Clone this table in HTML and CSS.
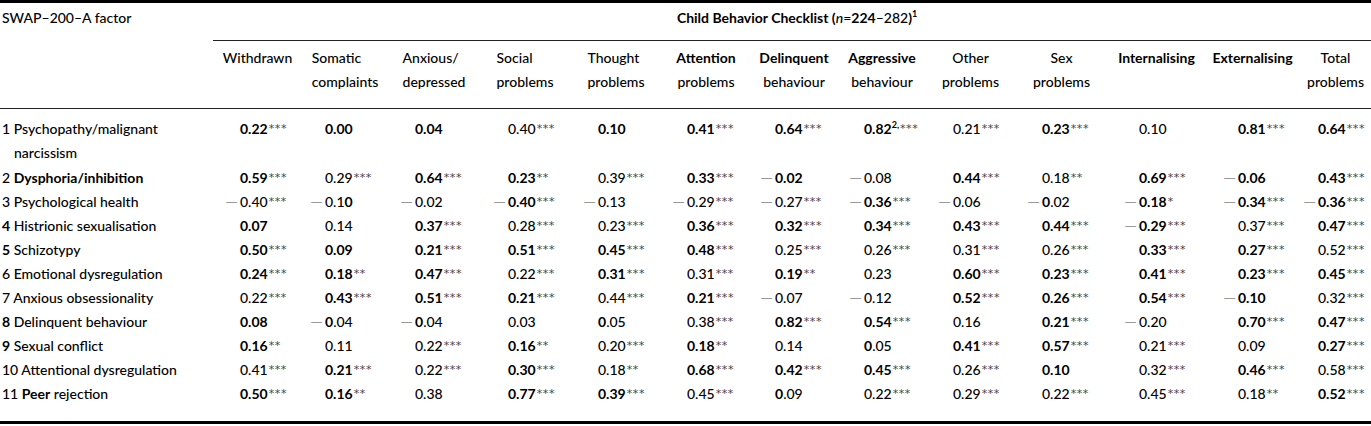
FILE: index.html
```html
<!DOCTYPE html>
<html lang="en">
<head>
<meta charset="utf-8">
<title>SWAP-200-A factors and CBCL</title>
<link rel="stylesheet" href="styles.css">
</head>
<body>
<div class="frame">
<table class="t">
<colgroup>
<col style="width:213px"><col style="width:89px"><col style="width:86px"><col style="width:92px"><col style="width:90px"><col style="width:92px"><col style="width:88px"><col style="width:88px"><col style="width:88px"><col style="width:89px"><col style="width:93px"><col style="width:97px"><col style="width:95px"><col style="width:71px">
</colgroup>
<thead>
<tr class="r1">
<th class="factor">SWAP–200–A factor</th>
<th class="grp" colspan="13"><b>Child Behavior Checklist (</b><i>n</i>=<b>224</b>–282<b>)</b><sup class="fn">1</sup></th>
</tr>
<tr class="r2">
<th></th>
<th>Withdrawn</th>
<th><span class="hl">Somatic<br>complaints</span></th>
<th><span class="hl">Anxious/<br>depressed</span></th>
<th><span class="hl">Social<br>problems</span></th>
<th><span class="hl">Thought<br>problems</span></th>
<th class="bh">Attention<br><span class="nb">problems</span></th>
<th class="bh">Delinquent<br><span class="nb">behaviour</span></th>
<th class="bh">Aggressive<br><span class="nb">behaviour</span></th>
<th>Other<br>problems</th>
<th>Sex<br>problems</th>
<th class="bh">Internalising</th>
<th class="bh">Externalising</th>
<th>Total<br>problems</th>
</tr>
</thead>
<tbody>
<tr>
<td class="lab">1 Psychopathy/malignant<br>narcissism</td>
<td><b>0.22</b><span class="s">***</span></td>
<td><b>0.00</b></td>
<td><b>0.04</b></td>
<td>0.40<span class="s">***</span></td>
<td><b>0.10</b></td>
<td><b>0.41</b><span class="s">***</span></td>
<td><b>0.64</b><span class="s">***</span></td>
<td><b>0.82</b><sup class="fn">2,</sup><span class="s">***</span></td>
<td>0.21<span class="s">***</span></td>
<td><b>0.23</b><span class="s">***</span></td>
<td>0.10</td>
<td><b>0.81</b><span class="s">***</span></td>
<td><b>0.64</b><span class="s">***</span></td>
</tr>
<tr>
<td class="lab">2 <b>Dysphoria/inhibition</b></td>
<td><b>0.59</b><span class="s">***</span></td>
<td>0.29<span class="s">***</span></td>
<td><b>0.64</b><span class="s">***</span></td>
<td><b>0.23</b><span class="s">**</span></td>
<td>0.39<span class="s">***</span></td>
<td><b>0.33</b><span class="s">***</span></td>
<td><span class="m">—</span><b>0.02</b></td>
<td><span class="m">—</span>0.08</td>
<td><b>0.44</b><span class="s">***</span></td>
<td>0.18<span class="s">**</span></td>
<td><b>0.69</b><span class="s">***</span></td>
<td><span class="m">—</span><b>0.06</b></td>
<td><b>0.43</b><span class="s">***</span></td>
</tr>
<tr>
<td class="lab">3 Psychological health</td>
<td><span class="m">—</span>0.40<span class="s">***</span></td>
<td><span class="m">—</span>0.1<b>0</b></td>
<td><span class="m">—</span>0.02</td>
<td><span class="m">—</span><b>0.40</b><span class="s">***</span></td>
<td><span class="m">—</span>0.13</td>
<td><span class="m">—</span>0.29<span class="s">***</span></td>
<td><span class="m">—</span>0.27<span class="s">***</span></td>
<td><span class="m">—</span><b>0.36</b><span class="s">***</span></td>
<td><span class="m">—</span>0.06</td>
<td><span class="m">—</span><b>0</b>.02</td>
<td><span class="m">—</span><b>0.18</b><span class="s">*</span></td>
<td><span class="m">—</span><b>0.34</b><span class="s">***</span></td>
<td><span class="m">—</span><b>0.36</b><span class="s">***</span></td>
</tr>
<tr>
<td class="lab"><b>4</b> Histrionic sexualisation</td>
<td><b>0.07</b></td>
<td>0.14</td>
<td><b>0.37</b><span class="s">***</span></td>
<td>0.28<span class="s">***</span></td>
<td>0.23<span class="s">***</span></td>
<td><b>0.36</b><span class="s">***</span></td>
<td><b>0.32</b><span class="s">***</span></td>
<td><b>0.34</b><span class="s">***</span></td>
<td><b>0.43</b><span class="s">***</span></td>
<td><b>0.44</b><span class="s">***</span></td>
<td><span class="m">—</span><b>0.29</b><span class="s">***</span></td>
<td>0.37<span class="s">***</span></td>
<td><b>0.47</b><span class="s">***</span></td>
</tr>
<tr>
<td class="lab"><b>5</b> Schizotypy</td>
<td><b>0.50</b><span class="s">***</span></td>
<td><b>0.09</b></td>
<td><b>0.21</b><span class="s">***</span></td>
<td><b>0.51</b><span class="s">***</span></td>
<td><b>0.45</b><span class="s">***</span></td>
<td><b>0.48</b><span class="s">***</span></td>
<td>0.25<span class="s">***</span></td>
<td>0.26<span class="s">***</span></td>
<td>0.31<span class="s">***</span></td>
<td>0.26<span class="s">***</span></td>
<td><b>0.33</b><span class="s">***</span></td>
<td><b>0.27</b><span class="s">***</span></td>
<td>0.52<span class="s">***</span></td>
</tr>
<tr>
<td class="lab">6 Emotional dysregulation</td>
<td><b>0.24</b><span class="s">***</span></td>
<td><b>0.18</b><span class="s">**</span></td>
<td><b>0.47</b><span class="s">***</span></td>
<td>0.22<span class="s">***</span></td>
<td><b>0.31</b><span class="s">***</span></td>
<td>0.31<span class="s">***</span></td>
<td><b>0.19</b><span class="s">**</span></td>
<td>0.23</td>
<td><b>0.60</b><span class="s">***</span></td>
<td><b>0.23</b><span class="s">***</span></td>
<td><b>0.41</b><span class="s">***</span></td>
<td><b>0.23</b><span class="s">***</span></td>
<td><b>0.45</b><span class="s">***</span></td>
</tr>
<tr>
<td class="lab">7 Anxious obsessionality</td>
<td>0.22<span class="s">***</span></td>
<td><b>0.43</b><span class="s">***</span></td>
<td><b>0.51</b><span class="s">***</span></td>
<td><b>0.21</b><span class="s">***</span></td>
<td>0.44<span class="s">***</span></td>
<td><b>0.21</b><span class="s">***</span></td>
<td><span class="m">—</span>0.07</td>
<td><span class="m">—</span>0.12</td>
<td><b>0.52</b><span class="s">***</span></td>
<td><b>0.26</b><span class="s">***</span></td>
<td><b>0.54</b><span class="s">***</span></td>
<td><span class="m">—</span><b>0.10</b></td>
<td>0.32<span class="s">***</span></td>
</tr>
<tr>
<td class="lab"><b>8</b> Delinquent behaviour</td>
<td><b>0.08</b></td>
<td><span class="m">—</span><b>0</b>.04</td>
<td><span class="m">—</span><b>0</b>.04</td>
<td>0.03</td>
<td><b>0</b>.05</td>
<td>0.38<span class="s">***</span></td>
<td><b>0.82</b><span class="s">***</span></td>
<td><b>0.54</b><span class="s">***</span></td>
<td>0.16</td>
<td><b>0.21</b><span class="s">***</span></td>
<td><span class="m">—</span>0.20</td>
<td><b>0.70</b><span class="s">***</span></td>
<td><b>0.47</b><span class="s">***</span></td>
</tr>
<tr>
<td class="lab"><b>9</b> Sexual conflict</td>
<td><b>0.16</b><span class="s">**</span></td>
<td>0.11</td>
<td>0.22<span class="s">***</span></td>
<td><b>0.16</b><span class="s">**</span></td>
<td>0.20<span class="s">***</span></td>
<td><b>0.18</b><span class="s">**</span></td>
<td>0.14</td>
<td><b>0</b>.05</td>
<td><b>0.41</b><span class="s">***</span></td>
<td><b>0.57</b><span class="s">***</span></td>
<td>0.21<span class="s">***</span></td>
<td>0.09</td>
<td><b>0.27</b><span class="s">***</span></td>
</tr>
<tr>
<td class="lab">10 Attentional dysregulation</td>
<td>0.41<span class="s">***</span></td>
<td><b>0.21</b><span class="s">***</span></td>
<td>0.22<span class="s">***</span></td>
<td><b>0.30</b><span class="s">***</span></td>
<td>0.18<span class="s">**</span></td>
<td><b>0.68</b><span class="s">***</span></td>
<td><b>0.42</b><span class="s">***</span></td>
<td><b>0.45</b><span class="s">***</span></td>
<td>0.26<span class="s">***</span></td>
<td><b>0.10</b></td>
<td>0.32<span class="s">***</span></td>
<td><b>0.46</b><span class="s">***</span></td>
<td>0.58<span class="s">***</span></td>
</tr>
<tr>
<td class="lab">11 <b>Peer</b> rejection</td>
<td><b>0.50</b><span class="s">***</span></td>
<td><b>0.16</b><span class="s">**</span></td>
<td>0.38</td>
<td><b>0.77</b><span class="s">***</span></td>
<td><b>0.39</b><span class="s">***</span></td>
<td>0.45<span class="s">***</span></td>
<td><b>0</b>.09</td>
<td>0.22<span class="s">***</span></td>
<td>0.29<span class="s">***</span></td>
<td>0.22<span class="s">***</span></td>
<td>0.45<span class="s">***</span></td>
<td>0.18<span class="s">**</span></td>
<td><b>0.52</b><span class="s">***</span></td>
</tr>
</tbody>
</table>
</div>
</body>
</html>
```
FILE: styles.css
```css
html, body {
  margin: 0;
  padding: 0;
  background: #fff;
}
body {
  font-family: Lato, "Liberation Sans", sans-serif;
  font-size: 14px;
  font-weight: 500;
  color: #000;
}
.frame {
  width: 1371px;
  border-top: 3px solid #000;
  border-bottom: 3px solid #000;
}
.t {
  width: 1371px;
  border-collapse: collapse;
  table-layout: fixed;
}
.t th {
  font-weight: 500;
  vertical-align: top;
}
.t b {
  font-weight: 700;
}
.r1 th {
  line-height: 23px;
  padding: 3px 0 11px;
}
.r1 .factor {
  text-align: left;
  padding-left: 2px;
  white-space: nowrap;
}
.r1 .grp {
  text-align: center;
  border-bottom: 1px solid #222;
  padding-left: 10px;
}
.r2 th {
  line-height: 24px;
  padding: 5px 0 14px;
  text-align: center;
  white-space: nowrap;
  border-bottom: 1px solid #222;
}
.r2 .bh {
  font-weight: 700;
}
.r2 .nb {
  font-weight: 500;
}
.hl {
  display: inline-block;
  text-align: left;
}
.fn {
  font-size: 9px;
  line-height: 0;
  vertical-align: 6px;
  font-weight: 700;
}
.t tbody td {
  line-height: 24px;
  height: 24px;
  padding: 0;
  vertical-align: top;
  white-space: nowrap;
}
.t tbody tr:first-child td {
  padding-top: 8px;
  padding-bottom: 1px;
}
.t tbody tr:last-child td {
  padding-bottom: 15px;
}
.t tbody td.lab {
  padding-left: 14px;
  text-indent: -12px;
}
.t tbody td:nth-child(2) { padding-left: 27px; }
.t tbody td:nth-child(3) { padding-left: 23px; }
.t tbody td:nth-child(4) { padding-left: 27px; }
.t tbody td:nth-child(5) { padding-left: 28px; }
.t tbody td:nth-child(6) { padding-left: 28px; }
.t tbody td:nth-child(7) { padding-left: 25px; }
.t tbody td:nth-child(8) { padding-left: 25px; }
.t tbody td:nth-child(9) { padding-left: 26px; }
.t tbody td:nth-child(10) { padding-left: 27px; }
.t tbody td:nth-child(11) { padding-left: 27px; }
.t tbody td:nth-child(12) { padding-left: 31px; }
.t tbody td:nth-child(13) { padding-left: 33px; }
.t tbody td:nth-child(14) { padding-left: 18px; }
.s {
  font-family: "DejaVu Sans", sans-serif;
  color: #444;
  font-size: 11px;
  font-weight: 400;
  line-height: 0;
  letter-spacing: 0.6px;
  margin-left: 1px;
  vertical-align: 2px;
}
.m {
  display: inline-block;
  width: 15px;
  margin-left: -17px;
  margin-right: 2px;
  line-height: 0;
  color: #999;
  font-size: 16px;
  font-weight: 400;
  text-align: right;
  text-indent: 0;
}
```
